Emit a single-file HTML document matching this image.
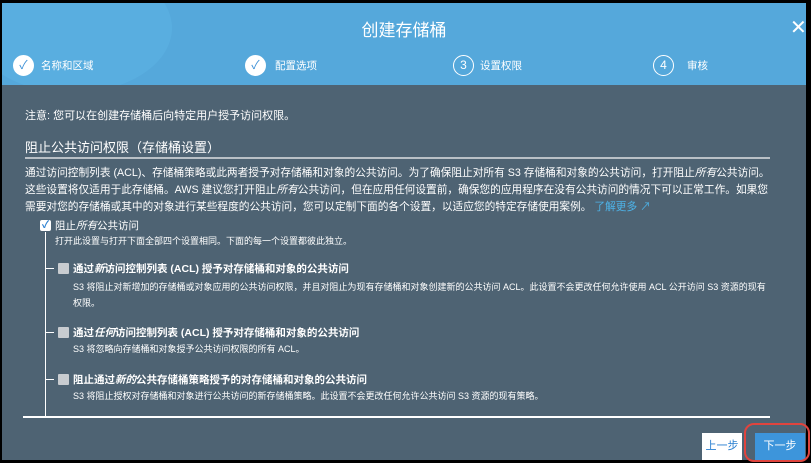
<!DOCTYPE html>
<html><head><meta charset="utf-8"><style>
*{margin:0;padding:0;box-sizing:border-box}
body{width:811px;height:463px;background:#000;position:relative;overflow:hidden;font-family:"Liberation Sans","Noto Sans CJK SC",sans-serif;color:#fff}
.a{position:absolute;white-space:nowrap}
#hdr{position:absolute;left:2px;top:3px;width:804px;height:82px;background:#55a8db;overflow:hidden}
#body{position:absolute;left:2px;top:85px;width:804px;height:375px;background:#4e6373}
.circ{position:absolute;width:21px;height:21px;border-radius:50%;border:1.5px solid #fff;font-size:12px;text-align:center;line-height:18px}
.chk{background:#fff;color:#3a8fd6}
.t10{font-size:10.7px}
.cb{position:absolute;width:11px;height:11px;background:#c8ccd0;border-radius:1px}
.it{font-size:10.5px;font-weight:bold}
</style></head><body>
<div id="hdr">
<div style="position:absolute;left:-30px;top:-40px;width:200px;height:130px;border-radius:50%;background:#5cb3e3;opacity:.6"></div>
<div class="a" style="left:0;width:804px;text-align:center;top:13px;font-size:17px">创建存储桶</div>
<div class="a" style="left:788px;top:12px;font-size:20px;font-weight:300">✕</div>
<div class="circ chk" style="left:11px;top:52px">✓</div><div class="a" style="left:39px;top:55px;font-size:10.5px">名称和区域</div>
<div class="circ chk" style="left:243px;top:52px">✓</div><div class="a" style="left:273px;top:55px;font-size:10.5px">配置选项</div>
<div class="circ" style="left:451px;top:52px">3</div><div class="a" style="left:478px;top:55px;font-size:10.5px">设置权限</div>
<div class="circ" style="left:651px;top:52px;border-width:1px">4</div><div class="a" style="left:685px;top:55px;font-size:10.5px">审核</div>
</div>
<div id="body"></div>
<div class="a" style="left:25px;top:107px;font-size:11px">注意: 您可以在创建存储桶后向特定用户授予访问权限。</div>
<div class="a" style="left:25px;top:137px;font-size:13px">阻止公共访问权限（存储桶设置）</div>
<div class="a" style="left:25px;top:157px;width:745px;height:2px;background:#b9c0c6"></div>
<div class="a t10" style="left:25px;top:165px;line-height:17px">通过访问控制列表 (ACL)、存储桶策略或此两者授予对存储桶和对象的公共访问。为了确保阻止对所有 S3 存储桶和对象的公共访问，打开阻止<i>所有</i>公共访问。<br>这些设置将仅适用于此存储桶。AWS 建议您打开阻止<i>所有</i>公共访问，但在应用任何设置前，确保您的应用程序在没有公共访问的情况下可以正常工作。如果您<br>需要对您的存储桶或其中的对象进行某些程度的公共访问，您可以定制下面的各个设置，以适应您的特定存储使用案例。 <span style="color:#4db3e8">了解更多 ↗</span></div>
<div class="a" style="left:40px;top:220px;width:11px;height:11px;background:#fff;border-radius:2px;color:#2a7fd0;font-size:10px;line-height:11px;text-align:center;font-weight:bold">✓</div>
<div class="a it" style="left:55px;top:218px;font-weight:normal">阻止<i>所有</i>公共访问</div>
<div class="a" style="left:45px;top:232px;width:1px;height:185px;background:#fff"></div>
<div class="a" style="left:55px;top:234px;font-size:9px">打开此设置与打开下面全部四个设置相同。下面的每一个设置都彼此独立。</div>
<div class="a" style="left:46px;top:268px;width:8px;height:1px;background:#fff"></div>
<div class="cb" style="left:58px;top:263px"></div>
<div class="a it" style="left:73px;top:261px">通过<i>新</i>访问控制列表 (ACL) 授予对存储桶和对象的公共访问</div>
<div class="a" style="left:73px;top:279px;font-size:9px;line-height:16px">S3 将阻止对新增加的存储桶或对象应用的公共访问权限，并且对阻止为现有存储桶和对象创建新的公共访问 ACL。此设置不会更改任何允许使用 ACL 公开访问 S3 资源的现有<br>权限。</div>
<div class="a" style="left:46px;top:332px;width:8px;height:1px;background:#fff"></div>
<div class="cb" style="left:58px;top:327px"></div>
<div class="a it" style="left:73px;top:325px">通过<i>任何</i>访问控制列表 (ACL) 授予对存储桶和对象的公共访问</div>
<div class="a" style="left:73px;top:342px;font-size:9px">S3 将忽略向存储桶和对象授予公共访问权限的所有 ACL。</div>
<div class="a" style="left:46px;top:379px;width:8px;height:1px;background:#fff"></div>
<div class="cb" style="left:58px;top:374px"></div>
<div class="a it" style="left:73px;top:372px">阻止通过<i>新的</i>公共存储桶策略授予的对存储桶和对象的公共访问</div>
<div class="a" style="left:73px;top:389px;font-size:9px">S3 将阻止授权对存储桶和对象进行公共访问的新存储桶策略。此设置不会更改任何允许公共访问 S3 资源的现有策略。</div>
<div class="a" style="left:23px;top:416px;width:747px;height:2px;background:#fff"></div>
<div class="a" style="left:702px;top:433px;width:40px;height:27px;background:#fff;color:#2a7fd0;font-size:11px;text-align:center;line-height:27px">上一步</div>
<div class="a" style="left:755px;top:433px;width:50px;height:27px;background:#3d95db;color:#fff;font-size:11px;text-align:center;line-height:27px">下一步</div>
<div class="a" style="left:744px;top:423px;width:66px;height:39px;border:2px solid #e0443e;border-radius:10px"></div>
</body></html>
